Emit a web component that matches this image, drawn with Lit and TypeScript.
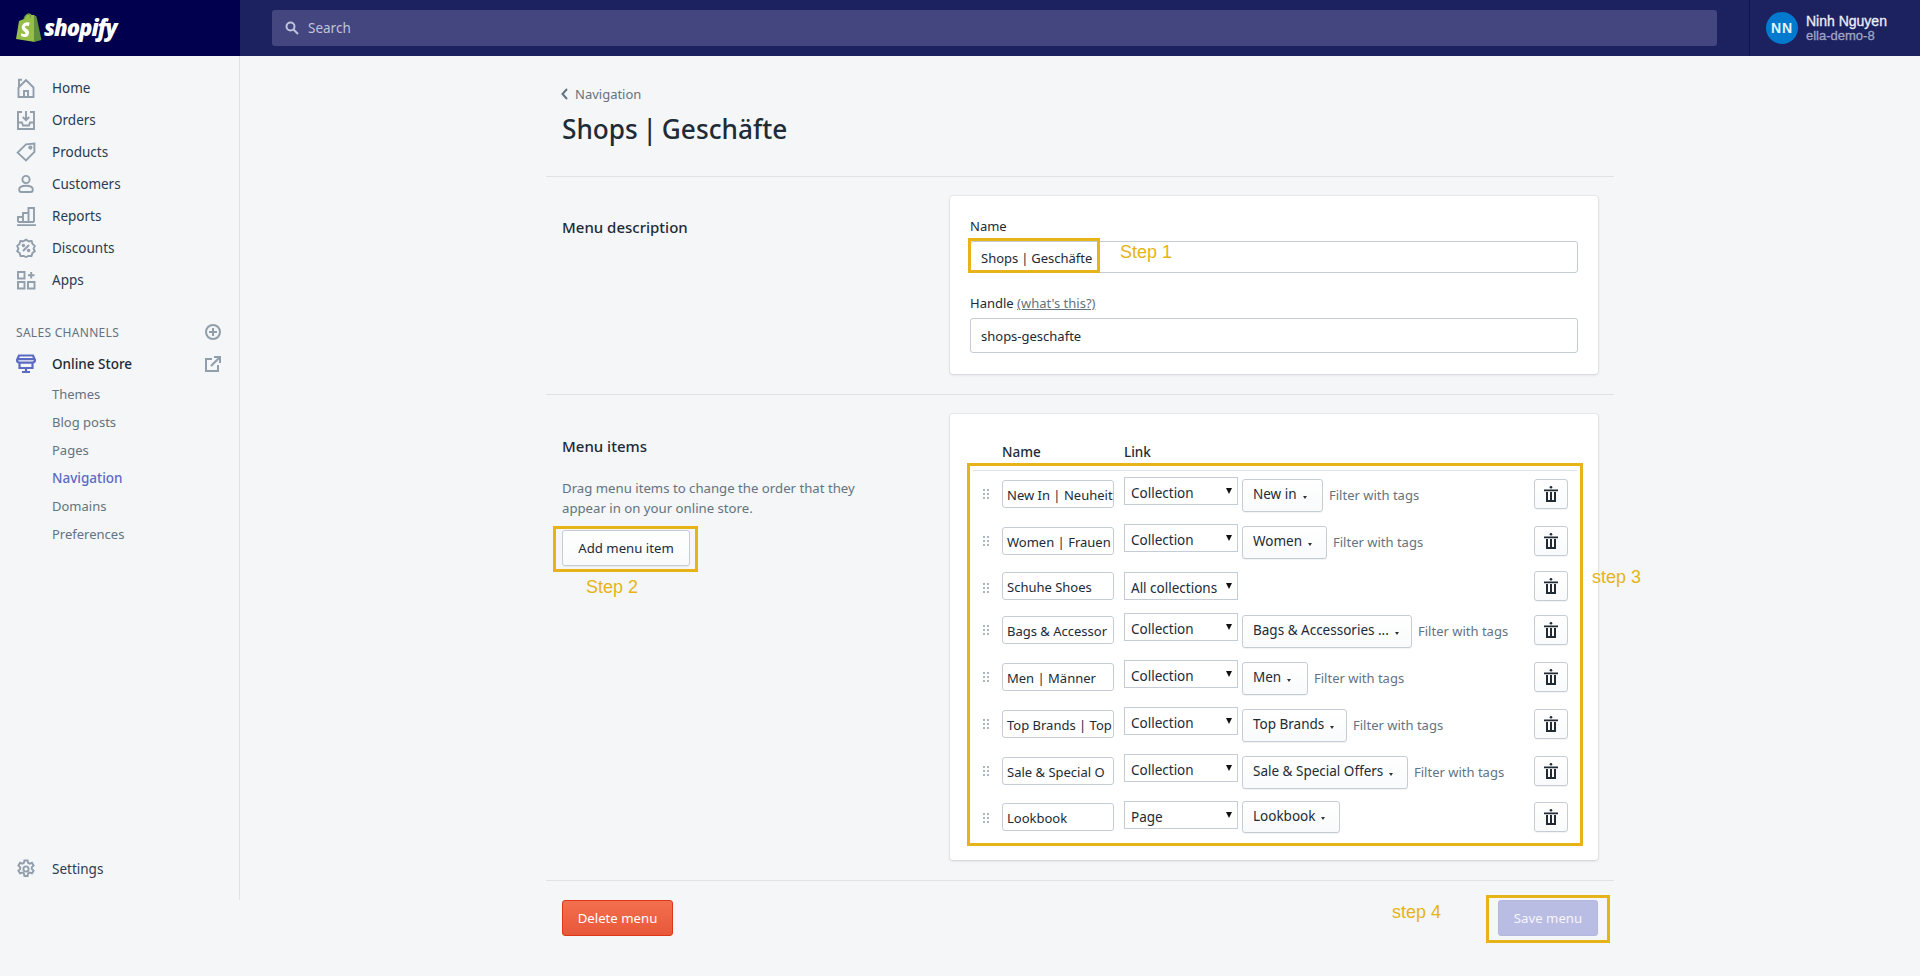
import { LitElement, html, css, svg } from "lit";
import { customElement } from "lit/decorators.js";

const navIcons: Record<string, unknown> = {
  home: svg`<path d="M2.5 19V9.5L10 2l7.500 7.500V19zM3 9V1.800h3M8 19v-6h4v6"/>`,
  orders: svg`<path d="M6 2H2v17h16V2h-4M2 12.500h4l1 3h6l1-3h4M10 1v9M6.800 7l3.200 3.200L13.200 7"/>`,
  products: svg`<path d="M1.600 10.600L10 2.400 18.400 1.600v8.200L10 18.400z"/><circle cx="14.400" cy="5.600" r="1.200"/>`,
  customers: svg`<circle cx="10" cy="5.500" r="3.600"/><path d="M3.200 15.400c0-2.200 3-3.600 6.800-3.600s6.800 1.400 6.800 3.600c0 1.600-.9 2.600-2 2.600H5.200c-1.100 0-2-1-2-2.600z"/>`,
  reports: svg`<path d="M1 19.200h19M2 16v-5h5v5M7 16V7h5.500v9M12.500 16V2H18v14M2 16h16"/>`,
  discounts: svg`<path d="M10 1.600l2.600 1.600 3-.2.900 2.900 2.300 2-1.200 2.800 1.200 2.600-2.400 1.800-.9 2.900-3-.1L10 19l-2.500-1.100-3 .1-.9-2.900-2.400-1.800 1.200-2.600L1.200 7.900l2.300-2 .9-2.900 3 .2z"/><path d="M13 7l-6 6"/><circle cx="7.400" cy="7.600" r=".8"/><circle cx="12.600" cy="12.400" r=".8"/>`,
  apps: svg`<path d="M2 2h6.500v6.500H2zM2 12h6.500v6.500H2zM12 12h6.500v6.500H12zM15.200 2v6.500M12 5.200h6.500"/>`,
  store: svg`<path d="M3 1.500h14L19 6c0 1.800-1.400 2.600-3 2.600H4C2.400 8.600 1 7.800 1 6zM1.500 5.200h17M3.500 8.600V14h13V8.600M10 14v3.500M6 18h8"/>`,
  settings: svg`<path d="M8.400 1.500h3.200l.5 2.400 1.600.8 2.300-.9 1.600 2.800-1.800 1.600v1.800l1.800 1.600-1.600 2.800-2.300-.9-1.600.8-.5 2.700H8.400l-.5-2.700-1.600-.8-2.300.9-1.600-2.800 1.800-1.600V8.200L2.400 6.600 4 3.800l2.300.9 1.600-.8z"/><circle cx="10" cy="10" r="2.600"/>`,
};

const mainNav = [
  ["home", "Home"], ["orders", "Orders"], ["products", "Products"], ["customers", "Customers"],
  ["reports", "Reports"], ["discounts", "Discounts"], ["apps", "Apps"],
];
const subNav = ["Themes", "Blog posts", "Pages", "Navigation", "Domains", "Preferences"];

type Row = { name: string; type: string; target?: string; w?: number; kind: string; filter?: boolean };
const rows: Row[] = [
  { name: "New In | Neuheit", type: "Collection", target: "New in", w: 81, kind: "full", filter: true },
  { name: "Women | Frauen", type: "Collection", target: "Women", w: 85, kind: "full", filter: true },
  { name: "Schuhe Shoes", type: "All collections", kind: "bare" },
  { name: "Bags & Accessor", type: "Collection", target: "Bags & Accessories ...", w: 170, kind: "full", filter: true },
  { name: "Men | Männer", type: "Collection", target: "Men", w: 66, kind: "full", filter: true },
  { name: "Top Brands | Top", type: "Collection", target: "Top Brands", w: 105, kind: "full", filter: true },
  { name: "Sale & Special O", type: "Collection", target: "Sale & Special Offers", w: 166, kind: "full", filter: true },
  { name: "Lookbook", type: "Page", target: "Lookbook", w: 98, kind: "last" },
];

@customElement("app-root")
export class AppRoot extends LitElement {
  static styles = css`
    :host { display: block; height: 976px; background: #f4f6f8; font-family: "Noto Sans", sans-serif; font-size: 13.5px; color: #212b36; overflow: hidden; }
    * { box-sizing: border-box; }
    .top { display: flex; height: 56px; background: #1c2260; }
    .brand { width: 240px; background: #00004f; display: flex; align-items: center; padding-left: 15px; gap: 2px; }
    .brand svg { width: 27px; height: 30px; }
    .brand span { font: italic 800 22px "Open Sans", sans-serif; letter-spacing: -1px; color: #fff; margin-top: -2px; }
    .searchwrap { flex: 1; padding: 10px 32px; }
    .search { height: 36px; width: 1445px; background: #43467f; border-radius: 3px; display: flex; align-items: center; padding-left: 12px; gap: 8px; color: #c1c3dc; }
    .search svg { width: 16px; height: 16px; fill: none; stroke: #c1c3dc; stroke-width: 2; }
    .user { width: 171px; border-left: 1px solid #0f1549; display: flex; align-items: center; padding-left: 16px; gap: 8px; font-family: "Liberation Sans", sans-serif; }
    .avatar { width: 32px; height: 32px; border-radius: 50%; background: #007ace; color: #e6f3fb; display: flex; align-items: center; justify-content: center; font-size: 14px; font-weight: 700; letter-spacing: 1px; }
    .uname { color: #eceef8; font-size: 14px; line-height: 16px; -webkit-text-stroke: .3px #eceef8; }
    .ushop { color: #a2a4c4; font-size: 13px; line-height: 14px; -webkit-text-stroke: .3px #a2a4c4; margin-bottom: 1px; }
    .body { display: flex; }
    .side { width: 240px; height: 844px; border-right: 1px solid #dfe3e8; padding: 16px 0 15px; display: flex; flex-direction: column; }
    .nav { display: flex; align-items: center; height: 32px; padding-left: 16px; color: #2a3a50; }
    .nav svg { width: 20px; height: 20px; fill: none; stroke: #919eab; stroke-width: 1.9; flex: none; }
    .nav span { margin-left: 16px; }
    .store { color: #212b36; font-weight: 500; }
    .nav.store svg { stroke: #5c6ac4; stroke-width: 2.2; }
    .nav.store .ext { margin-left: auto; margin-right: 18px; width: 16px; height: 16px; stroke: #919eab; stroke-width: 2; }
    .channels { display: flex; align-items: center; justify-content: space-between; height: 32px; margin-top: 20px; padding: 0 18px 0 16px; font-size: 12px; letter-spacing: .3px; color: #637381; }
    .channels svg { width: 16px; height: 16px; fill: none; stroke: #919eab; stroke-width: 2; }
    .sub { height: 28px; display: flex; align-items: center; padding-left: 52px; color: #637381; font-size: 13px; }
    .sub.on { color: #5c6ac4; font-weight: 500; font-size: 13.5px; }
    .settings { margin-top: auto; }
    main { flex: 1; display: flex; justify-content: center; }
    .page { width: 1068px; }
    .head { height: 120px; padding: 28px 16px 0; }
    .back { display: flex; align-items: center; gap: 7px; height: 20px; color: #637381; font-size: 13px; margin-left: -1px; }
    .back svg { width: 7px; height: 12px; fill: none; stroke: #637381; stroke-width: 2; }
    h1 { margin: 5px 0 0; font-size: 26.2px; word-spacing: -2px; line-height: 40px; font-weight: 500; color: #212b36; }
    .section { display: grid; grid-template-columns: 388px 1fr; padding: 19px 16px 20px; border-top: 1px solid #dfe3e8; }
    h2 { margin: 0; font-size: 15px; line-height: 20px; font-weight: 500; color: #212b36; }
    .h2a { padding-top: 21px; }
    .lead { padding-top: 22px; }
    .lead p { margin: 22px 0 0; width: 310px; line-height: 20px; color: #637381; font-size: 13.2px; }
    .card { background: #fff; border-radius: 3px; box-shadow: 0 0 0 1px rgba(63,63,68,.05), 0 1px 3px rgba(63,63,68,.15); }
    .c1 { padding: 20px 20px 21px 20px; height: 178px; }
    .lbl { line-height: 20px; margin-bottom: 5px; color: #212b36; font-size: 13px; }
    .lbl a { color: #637381; text-decoration: underline; }
    .field { position: relative; }
    .field + .lbl { margin-top: 20px; }
    .inp { display: flex; align-items: center; border: 1px solid #c4cdd5; border-radius: 3px; background: #fff; padding: 0 10px; white-space: nowrap; overflow: hidden; color: #212b36; font-size: 13px; }
    .i1 { height: 32px; padding-top: 2px; word-spacing: -.5px; }
    .i2 { height: 35px; }
    .mark { position: absolute; border: 3px solid #e6b416; pointer-events: none; }
    .step { position: absolute; font: 18px/22px "Liberation Sans", sans-serif; color: #e6b416; white-space: nowrap; }
    .m1 { left: -2px; top: -3px; width: 132px; height: 35px; }
    .s1 { left: 150px; top: 0; }
    .addwrap { position: relative; width: 128px; margin-top: 12px; }
    .btn { display: flex; align-items: center; justify-content: center; border: 1px solid #c4cdd5; border-radius: 3px; background: linear-gradient(#fff, #f9fafb); box-shadow: 0 1px 0 rgba(22,29,37,.05); color: #212b36; white-space: nowrap; }
    .add { height: 36px; width: 128px; font-size: 13.2px; }
    .m2 { left: -9px; top: -4px; width: 145px; height: 46px; }
    .s2 { left: 24px; top: 46px; }
    .c2 { padding: 28px 15px 14px 17px; }
    .hdr { display: flex; line-height: 20px; padding-left: 35px; font-weight: 500; font-size: 13.5px; }
    .hdr span:first-child { width: 122px; }
    .items { position: relative; margin-top: 1px; height: 383px; border: 3px solid #e6b416; padding: 4px 3px 0; }
    .rule { border-top: 1px solid #dfe3e8; height: 7px; }
    .row { display: flex; align-items: flex-start; padding: 0 9px 0 10px; margin-bottom: 12px; }
    .grip { width: 6px; height: 10px; flex: none; margin: 12px 13px 0 0; fill: #919eab; }
    .nm { width: 112px; height: 28px; padding: 2px 4px 0; margin: 3px 10px 0 0; flex: none; }
    .sel { width: 114px; height: 28px; border: 1px solid #c4cdd5; background: #fff; display: flex; align-items: center; padding: 3px 0 0 6px; position: relative; flex: none; margin-right: 4px; }
    .sel::after { content: ""; position: absolute; right: 5px; top: 10px; border: 3.500px solid transparent; border-top: 6px solid #111; border-bottom: 0; }
    .pop { height: 33px; margin-top: 2px; justify-content: flex-start; padding: 0 0 3px 10px; flex: none; }
    .pop i { border: 2.500px solid transparent; border-top: 3px solid #333; border-bottom: 0; margin: 6px 0 0 6px; }
    .flt { margin: 9px 0 0 6px; color: #637381; font-size: 13px; }
    .del { width: 34px; height: 30px; margin: 2px 0 0 auto; flex: none; }
    .del svg { width: 14px; height: 16px; fill: #212b36; }
    .bare .sel { margin-top: 1px; }
    .bare .nm { margin-top: 1px; }
    .bare .del { margin-top: 0; }
    .last .pop { margin-top: 0; height: 32px; }
    .last .nm { margin-top: 2px; }
    .last .del { margin-top: 1px; }
    .s3 { left: 622px; top: 100px; }
    .foot { border-top: 1px solid #dfe3e8; padding: 19px 16px 0; display: flex; justify-content: space-between; }
    .danger { height: 36px; width: 111px; border: 1px solid #de3618; background: linear-gradient(#f2704f, #e9573a); color: #fff; box-shadow: none; font-size: 13.2px; }
    .savewrap { position: relative; }
    .save { height: 36px; width: 100px; border: 1px solid #b3b8de; background: #b9bde3; color: #f5f5fb; box-shadow: none; font-size: 13.2px; }
    .m4 { left: -12px; top: -5px; width: 124px; height: 48px; }
    .s4 { left: -106px; top: 1px; }
  `;

  private icon(n: string) {
    return html`<svg viewBox="0 0 20 20">${navIcons[n]}</svg>`;
  }

  private row(r: Row) {
    return html`<div class="row ${r.kind}">
      <svg class="grip" viewBox="0 0 6 10"><circle cx="1" cy="1" r="1"/><circle cx="5" cy="1" r="1"/><circle cx="1" cy="5" r="1"/><circle cx="5" cy="5" r="1"/><circle cx="1" cy="9" r="1"/><circle cx="5" cy="9" r="1"/></svg>
      <div class="inp nm">${r.name}</div>
      <div class="sel">${r.type}</div>
      ${r.target ? html`<div class="btn pop" style="width:${r.w}px">${r.target}<i></i></div>` : ""}
      ${r.filter ? html`<div class="flt">Filter with tags</div>` : ""}
      <div class="btn del"><svg viewBox="0 0 14 16"><circle cx="7" cy="1.300" r="1.300"/><path d="M0 3.500h14v1.800H0zM2 6h2v8h2V6h2v8h2V6h2v10H2z"/></svg></div>
    </div>`;
  }

  render() {
    return html`
      <div class="top">
        <div class="brand">
          <svg viewBox="0 0 27 30"><path fill="#95bf47" d="M1 26l3-18 5-2c1-3 3-5.500 5-5.500 1 0 2 .5 2.500 1.500L19 2l1 27z"/><path fill="#5e8e3e" d="M19 2l2.500 1.500L26.500 27 19 29z"/><path fill="none" stroke="#5e8e3e" stroke-width="1" d="M9 6c.5-3 2-5 4-5s2.500 2 2.500 3.500"/><path fill="#fff" d="M14.500 10.500l-.8 2.600s-1-.5-2.200-.4c-1.700.1-1.700 1.200-1.700 1.400.1 1.500 4 1.800 4.200 5.300.2 2.700-1.400 4.600-3.800 4.700-2.800.2-4.300-1.500-4.300-1.500l.6-2.500s1.500 1.200 2.800 1.100c.8 0 1.100-.7 1.100-1.200-.1-2-3.400-1.900-3.600-5.100-.2-2.700 1.600-5.500 5.500-5.700 1.500-.1 2.200.3 2.200.3z"/></svg>
          <span>shopify</span>
        </div>
        <div class="searchwrap">
          <div class="search"><svg viewBox="0 0 16 16"><circle cx="6.500" cy="6.500" r="4"/><path d="M9.500 9.500l4.500 4.500"/></svg>Search</div>
        </div>
        <div class="user">
          <div class="avatar">NN</div>
          <div><div class="uname">Ninh Nguyen</div><div class="ushop">ella-demo-8</div></div>
        </div>
      </div>
      <div class="body">
        <aside class="side">
          ${mainNav.map(([i, t]) => html`<div class="nav">${this.icon(i)}<span>${t}</span></div>`)}
          <div class="channels">SALES CHANNELS<svg viewBox="0 0 16 16"><circle cx="8" cy="8" r="7"/><path d="M8 4v8M4 8h8"/></svg></div>
          <div class="nav store">${this.icon("store")}<span>Online Store</span>
            <svg class="ext" viewBox="0 0 16 16"><path d="M7 3H1v12h12V9M6 10l9-9M9 1h6v6"/></svg></div>
          ${subNav.map((t) => html`<div class="sub ${t === "Navigation" ? "on" : ""}">${t}</div>`)}
          <div class="nav settings">${this.icon("settings")}<span>Settings</span></div>
        </aside>
        <main>
          <div class="page">
            <div class="head">
              <div class="back"><svg viewBox="0 0 7 12"><path d="M6 1L1.500 6 6 11"/></svg>Navigation</div>
              <h1>Shops | Geschäfte</h1>
            </div>
            <section class="section">
              <div class="h2a"><h2>Menu description</h2></div>
              <div class="card c1">
                <div class="lbl">Name</div>
                <div class="field">
                  <div class="inp i1">Shops | Geschäfte</div>
                  <span class="mark m1"></span>
                  <span class="step s1">Step 1</span>
                </div>
                <div class="lbl">Handle <a>(what's this?)</a></div>
                <div class="field"><div class="inp i2">shops-geschafte</div></div>
              </div>
            </section>
            <section class="section">
              <div class="lead">
                <h2>Menu items</h2>
                <p>Drag menu items to change the order that they appear in on your online store.</p>
                <div class="addwrap">
                  <div class="btn add">Add menu item</div>
                  <span class="mark m2"></span>
                  <span class="step s2">Step 2</span>
                </div>
              </div>
              <div class="card c2">
                <div class="hdr"><span>Name</span><span>Link</span></div>
                <div class="items">
                  <div class="rule"></div>
                  ${rows.map((r) => this.row(r))}
                  <span class="step s3">step 3</span>
                </div>
              </div>
            </section>
            <div class="foot">
              <div class="btn danger">Delete menu</div>
              <div class="savewrap">
                <div class="btn save">Save menu</div>
                <span class="mark m4"></span>
                <span class="step s4">step 4</span>
              </div>
            </div>
          </div>
        </main>
      </div>
    `;
  }
}
